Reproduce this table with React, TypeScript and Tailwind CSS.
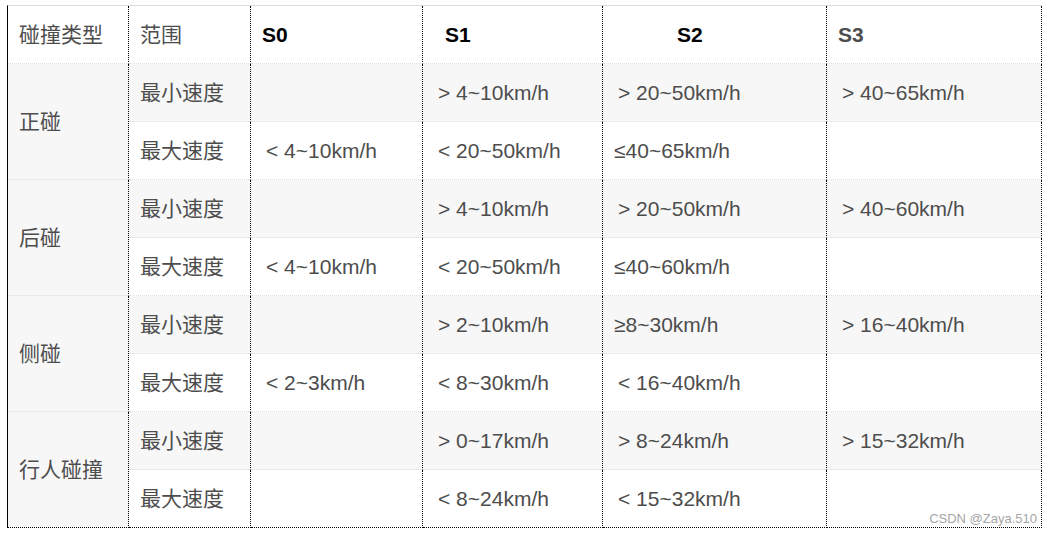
type Row = [string, string, string, string, string];

interface Group {
  name: string;
  rows: [Row, Row];
}

const groups: Group[] = [
  {
    name: '正碰',
    rows: [
      ['最小速度', '', '> 4~10km/h', '> 20~50km/h', '> 40~65km/h'],
      ['最大速度', '< 4~10km/h', '< 20~50km/h', '≤40~65km/h', ''],
    ],
  },
  {
    name: '后碰',
    rows: [
      ['最小速度', '', '> 4~10km/h', '> 20~50km/h', '> 40~60km/h'],
      ['最大速度', '< 4~10km/h', '< 20~50km/h', '≤40~60km/h', ''],
    ],
  },
  {
    name: '侧碰',
    rows: [
      ['最小速度', '', '> 2~10km/h', '≥8~30km/h', '> 16~40km/h'],
      ['最大速度', '< 2~3km/h', '< 8~30km/h', '< 16~40km/h', ''],
    ],
  },
  {
    name: '行人碰撞',
    rows: [
      ['最小速度', '', '> 0~17km/h', '> 8~24km/h', '> 15~32km/h'],
      ['最大速度', '', '< 8~24km/h', '< 15~32km/h', ''],
    ],
  },
];

const font = { fontFamily: '"Liberation Sans", Arial, "Noto Sans CJK SC", sans-serif' };

export default function App() {
  return (
    <div className="min-h-[535px] w-[1051px] bg-white pt-[5px] pl-[7px]" style={font}>
      <div className="relative grid w-[1035px] grid-cols-[121px_122px_172px_180px_224px_215px] auto-rows-[58px] border-t border-l border-t-[#dddddd] border-l-black border-l-dotted text-[21px] text-[#4d4d4d]">
        {/* header */}
        <div className="flex items-center border-r border-b border-r-black border-dotted border-b-[#dddddd] border-b-solid pl-[11px]">碰撞类型</div>
        <div className="flex items-center border-r border-b border-r-black border-dotted border-b-[#dddddd] border-b-solid pl-[11px]">范围</div>
        <div className="flex items-center border-r border-b border-r-black border-dotted border-b-[#dddddd] border-b-solid pl-[11px] font-bold text-black">S0</div>
        <div className="flex items-center border-r border-b border-r-black border-dotted border-b-[#dddddd] border-b-solid pl-[22px] font-bold text-black">S1</div>
        <div className="flex items-center border-r border-b border-r-black border-dotted border-b-[#dddddd] border-b-solid pl-[74px] font-bold text-black">S2</div>
        <div className="flex items-center border-r border-b border-r-black border-dotted border-b-[#dddddd] border-b-solid pl-[11px] font-bold text-[#4d4d4d]">S3</div>

        {groups.map((g, gi) => {
          const last = gi === groups.length - 1;
          return (
            <>
              <div
                key={g.name}
                className={`row-span-2 flex items-center bg-[#f7f7f7] pl-[11px] border-r border-b border-r-black border-dotted ${
                  last ? 'border-b-black' : 'border-b-[#dddddd] border-b-solid'
                }`}
              >
                {g.name}
              </div>
              {g.rows.map((r, ri) => {
                const bottom = last && ri === 1;
                return r.map((t, ci) => (
                  <div
                    key={`${gi}-${ri}-${ci}`}
                    className={`flex items-center whitespace-nowrap border-r border-b border-r-black border-dotted ${
                      bottom ? 'border-b-black' : 'border-b-[#dddddd] border-b-solid'
                    } ${ri === 0 ? 'bg-[#f7f7f7]' : 'bg-white'} ${
                      t.startsWith('>') || t.startsWith('<') ? 'pl-[15px]' : 'pl-[11px]'
                    }`}
                  >
                    {t.startsWith('>') || t.startsWith('<') ? (
                      <span className="whitespace-pre">{t}</span>
                    ) : (
                      t
                    )}
                  </div>
                ));
              })}
            </>
          );
        })}

        <div className="absolute right-[5px] bottom-[2px] text-[13px] leading-[15px] text-[#a6a6a6] [text-shadow:0_0_1px_#ffffff]">
          CSDN @Zaya.510
        </div>
      </div>
    </div>
  );
}
